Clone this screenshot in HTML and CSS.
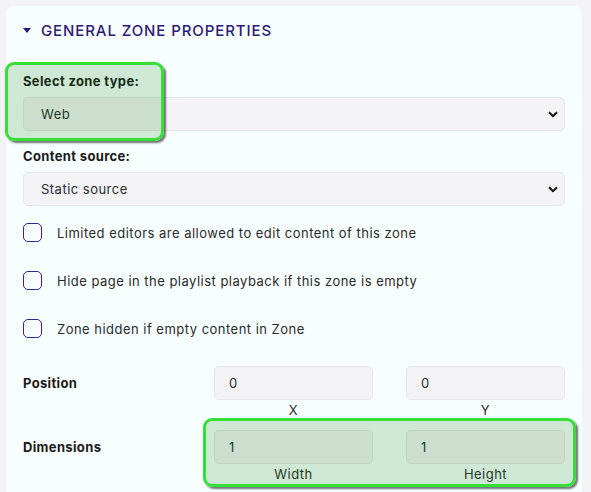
FILE: index.html
```html
<!DOCTYPE html>
<html>
<head>
<meta charset="utf-8">
<link rel="stylesheet" href="styles.css">
</head>
<body>
<div class="card">
  <div class="section-head">
    <svg class="caret" width="8" height="5" viewBox="0 0 8 5"><path d="M0 0 H8 L4 5 Z" fill="#2c1a76"/></svg>
    <span>GENERAL ZONE PROPERTIES</span>
  </div>

  <div class="field-label first">Select zone type:</div>
  <div class="select">
    <span>Web</span>
    <svg class="chev" width="10" height="7" viewBox="0 0 10 7"><path d="M1 1.2 L5 5.2 L9 1.2" fill="none" stroke="#111" stroke-width="2"/></svg>
  </div>

  <div class="field-label">Content source:</div>
  <div class="select">
    <span>Static source</span>
    <svg class="chev" width="10" height="7" viewBox="0 0 10 7"><path d="M1 1.2 L5 5.2 L9 1.2" fill="none" stroke="#111" stroke-width="2"/></svg>
  </div>

  <div class="checks">
    <label class="check"><span class="box"></span><span>Limited editors are allowed to edit content of this zone</span></label>
    <label class="check"><span class="box"></span><span>Hide page in the playlist playback if this zone is empty</span></label>
    <label class="check"><span class="box"></span><span>Zone hidden if empty content in Zone</span></label>
  </div>

  <div class="pair-row first-pair">
    <div class="pair-label">Position</div>
    <div class="pair-cell"><div class="input">0</div><div class="sub">X</div></div>
    <div class="pair-cell"><div class="input">0</div><div class="sub">Y</div></div>
  </div>
  <div class="pair-row">
    <div class="pair-label">Dimensions</div>
    <div class="pair-cell"><div class="input">1</div><div class="sub">Width</div></div>
    <div class="pair-cell"><div class="input">1</div><div class="sub">Height</div></div>
  </div>

  <div class="mark mark-type"></div>
  <div class="mark mark-dim"></div>
</div>
</body>
</html>
```

FILE: styles.css
```css
html, body {
  margin: 0;
  padding: 0;
  background: #f3f3f6;
}
body {
  font-family: Inter, "Open Sans", sans-serif;
  font-size: 13px;
  letter-spacing: 0.48px;
  color: #2a2a2a;
  padding: 6px 9px 0 6px;
  height: 100vh;
  box-sizing: border-box;
  overflow: hidden;
}
.card {
  position: relative;
  background: #f7fefe;
  border-radius: 8px 8px 0 0;
  padding: 14px 17px 0 17px;
  height: 100%;
  box-sizing: border-box;
}
.section-head {
  display: flex;
  align-items: center;
  height: 20px;
  color: #2c1a76;
  font-size: 15px;
  font-weight: 500;
  letter-spacing: 0.9px;
}
.caret {
  margin: 0 10px 0 0;
}
.field-label {
  font-weight: 700;
  color: #1b1b1b;
  letter-spacing: 0.35px;
  line-height: 18px;
  margin-top: 16px;
  margin-bottom: 7px;
}
.field-label.first {
  margin-top: 32px;
}
.select {
  height: 34px;
  box-sizing: border-box;
  background: #f3f3f6;
  border: 1px solid #e6e6ea;
  border-radius: 5px;
  display: flex;
  align-items: center;
  justify-content: space-between;
  padding: 0 6px 0 17px;
  color: #2c2c2c;
}
.checks {
  display: flex;
  flex-direction: column;
  gap: 29px;
  margin-top: 17px;
}
.check {
  display: flex;
  align-items: center;
  gap: 15px;
  height: 19px;
}
.box {
  width: 19px;
  height: 19px;
  box-sizing: border-box;
  border: 1.5px solid #3a1f95;
  border-radius: 5px;
  flex: none;
}
.pair-row {
  display: grid;
  grid-template-columns: 158px 159px 159px;
  column-gap: 33px;
  margin-top: 11px;
}
.pair-row.first-pair {
  margin-top: 28px;
}
.pair-label {
  font-weight: 700;
  color: #1b1b1b;
  letter-spacing: 0.35px;
  height: 34px;
  display: flex;
  align-items: center;
}
.input {
  height: 34px;
  box-sizing: border-box;
  background: #f3f3f6;
  border: 1px solid #e6e6ea;
  border-radius: 5px;
  display: flex;
  align-items: center;
  padding-left: 14px;
  color: #2c2c2c;
}
.sub {
  text-align: center;
  line-height: 18px;
  margin-top: 1px;
  color: #2c2c2c;
}
.mark {
  position: absolute;
  border: 3px solid #35df35;
  border-radius: 9px;
  background: rgba(0, 120, 0, 0.16);
  box-shadow: 2px 2px 2px rgba(0, 0, 0, 0.55);
  box-sizing: border-box;
}
.mark-type {
  left: -1px;
  top: 56px;
  width: 159px;
  height: 79px;
}
.mark-dim {
  left: 197px;
  top: 412px;
  width: 373px;
  height: 69px;
}
```
